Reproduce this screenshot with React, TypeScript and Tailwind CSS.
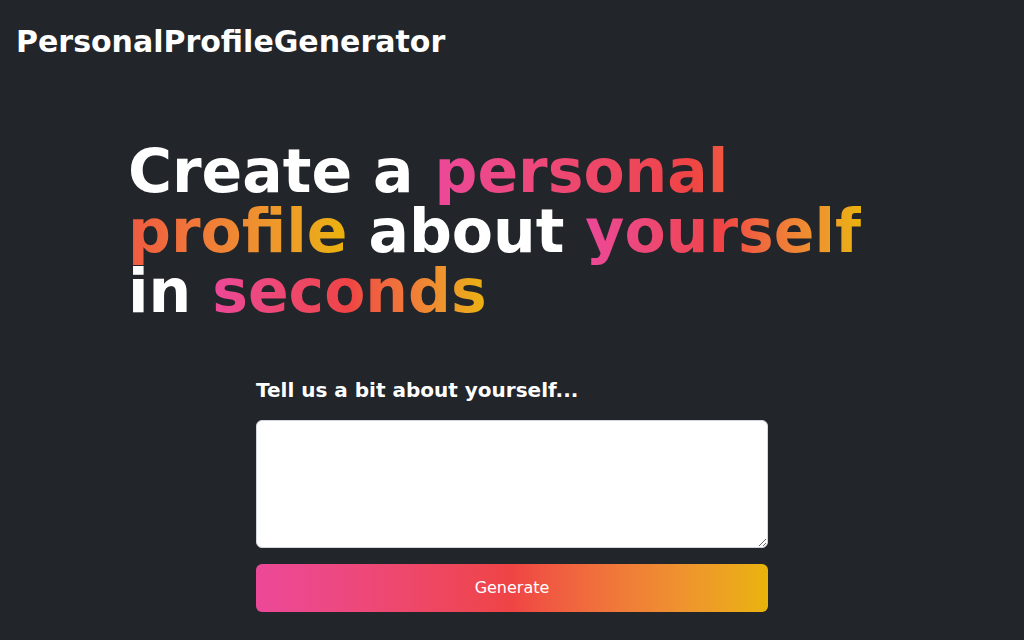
import React, { useState } from 'react';

const App: React.FC = () => {
    const [bio, setBio] = useState('');

    const gradientText = "bg-gradient-to-r from-[#ec4899] via-[#ef4444] to-[#eab308] bg-clip-text text-transparent";

    return (
        <div className="min-h-screen w-full bg-[#222529] font-['DejaVu_Sans',sans-serif] text-white">
            <header className="px-4 pt-6">
                <h1 className="text-3xl font-bold">PersonalProfileGenerator</h1>
            </header>

            <main className="mt-[81px]">
                <div className="max-w-3xl mx-auto">
                    <h2 className="text-6xl font-bold leading-[60px]">
                        Create a <span className={gradientText}>personal profile</span> about{' '}
                        <span className={gradientText}>yourself</span> in{' '}
                        <span className={gradientText}>seconds</span>
                    </h2>
                </div>

                <div className="max-w-lg mx-auto mt-[55px]">
                    <label className="block text-xl font-bold mb-4">Tell us a bit about yourself...</label>
                    <textarea
                        value={bio}
                        onChange={(e) => setBio(e.target.value)}
                        className="block w-full h-32 bg-white text-black rounded-md border border-gray-300 p-2"
                    />
                    <button className="mt-4 w-full h-12 rounded-md bg-gradient-to-r from-[#ec4899] via-[#ef4444] to-[#eab308] text-white text-base">
                        Generate
                    </button>
                </div>
            </main>
        </div>
    );
};

export default App;
